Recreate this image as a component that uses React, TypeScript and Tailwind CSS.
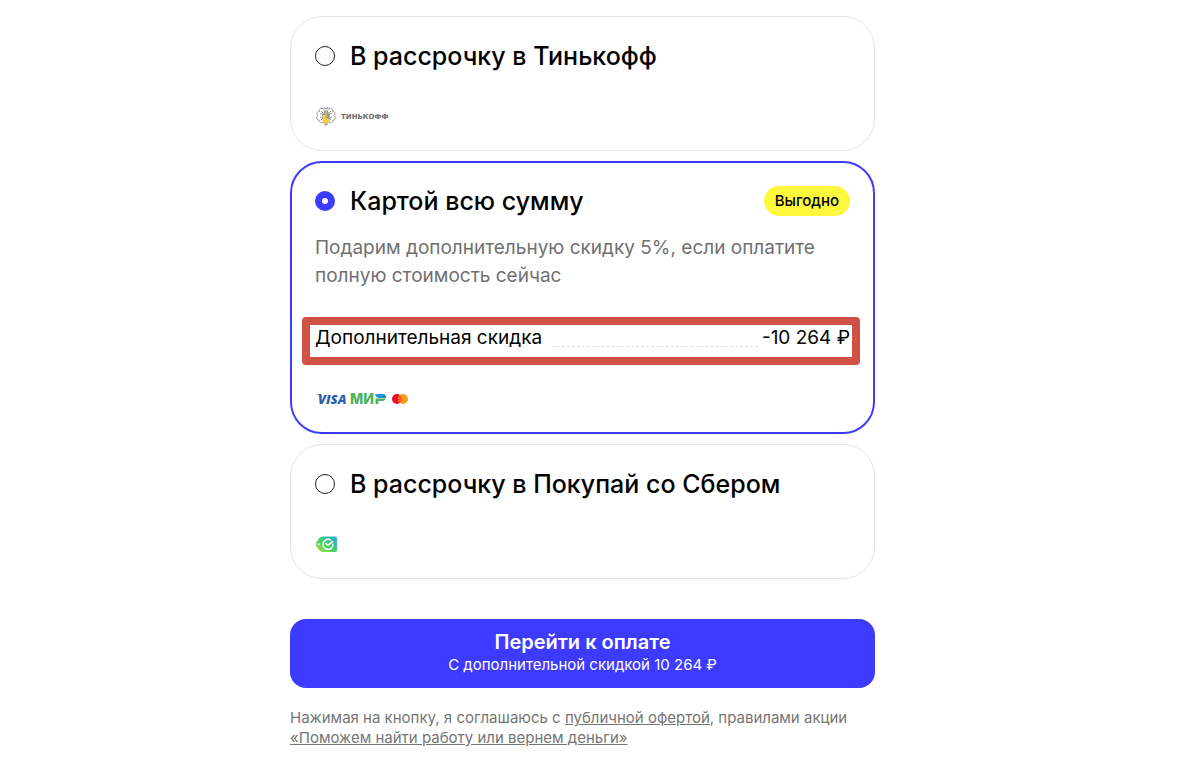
import { useState } from "react";
import type { ReactNode } from "react";

function TinkoffLogo() {
  return (
    <svg width="78" height="20" viewBox="0 0 78 20" role="img" aria-label="Тинькофф">
      <g fill="none" stroke="#8a8a8e" strokeWidth="0.9">
        <path d="M8 2.5C5 1.5 3.5 4 4.5 5.5C2 5.5 1 8 3 9.5C.8 11 1.5 14 4 14C3.8 16.5 6.5 17.5 8 16" />
        <path d="M14 2.5C17 1.5 18.5 4 17.5 5.500C20 5.500 21 8 19 9.500C21.200 11 20.500 14 18 14C18.200 16.500 15.500 17.500 14 16" />
        <path d="M5 8c2-1 3 0 3 2s-2 2-3 1M17 8c-2-1-3 0-3 2s2 2 3 1M6 5l2 2M16 5l-2 2M6 14l2-2M16 14l-2-2" />
        <path d="M9 4V1.500l2 1.500l2-1.500V4M9 17.500l2 2l2-2" />
      </g>
      <path d="M7.500 6l1.500 1V4.500h4V7L14.500 6v8c0 2-1.500 3-3.500 5c-2-2-3.500-3-3.500-5z" fill="#9a9a9c" />
      <path d="M8 9h2.500v3.500h1.500l2.500 1v2.500l-3.500 2l-3-2z" fill="#f5d437" />
      <path d="M10.500 5h1.300v6.500h-1.300z" fill="#e0c64c" />
      <text x="26" y="13" fill="#6c6c70" fontFamily="DejaVu Sans, sans-serif" fontSize="7" fontWeight="700">
        ТИНЬКОФФ
      </text>
    </svg>
  );
}

function VisaLogo() {
  return (
    <svg width="31" height="20" viewBox="0 0 31 20" role="img" aria-label="Visa">
      <path d="M1 5h5l1 3C5.500 6.500 3.500 5.500 1 5.300z" fill="#2a5fad" />
      <text x="3" y="15" fill="#2a5fad" fontFamily="Open Sans, sans-serif" fontSize="13" fontStyle="italic" fontWeight="800">
        VISA
      </text>
    </svg>
  );
}

function MirLogo() {
  return (
    <svg width="37" height="20" viewBox="0 0 37 20" role="img" aria-label="Мир">
      <defs>
        <linearGradient id="mir-blue" x1="0" x2="1">
          <stop offset="0" stopColor="#22a8dc" />
          <stop offset="1" stopColor="#1b86c8" />
        </linearGradient>
      </defs>
      <text x="0" y="15" fill="#4db45e" fontFamily="Inter, sans-serif" fontSize="14" fontWeight="800">
        МИ
      </text>
      <path d="M25.500 9.500h10.500c-.6 1.600-2 2.500-3.800 2.500H28.300v3h-2.800z" fill="#4db45e" />
      <path d="M25 5h7.800c2.300 0 3.700 1.700 3.300 4H29.200c-2.200 0-4-1.700-4.200-4z" fill="url(#mir-blue)" />
    </svg>
  );
}

function MastercardLogo() {
  return (
    <svg width="17" height="20" viewBox="0 0 17 20" role="img" aria-label="Mastercard">
      <circle cx="6" cy="10" r="5" fill="#eb0f25" />
      <circle cx="12" cy="10" r="5" fill="#f99d1f" />
      <path d="M9 6a5 5 0 0 1 0 8a5 5 0 0 1 0-8z" fill="#fc5d17" />
    </svg>
  );
}

function SberLogo() {
  return (
    <svg width="22" height="20" viewBox="0 0 22 20" role="img" aria-label="Покупай со Сбером">
      <defs>
        <linearGradient id="sber-tag" x1="0" y1="1" x2="1" y2="0">
          <stop offset="0" stopColor="#b5e43c" />
          <stop offset="0.5" stopColor="#42cf6c" />
          <stop offset="1" stopColor="#2fa7dd" />
        </linearGradient>
      </defs>
      <path d="M7.500 2.500H20Q22 2.500 22 4.500V16Q22 18 20 18H7.500Q5.500 18 4 16L1.500 12.500Q0 10.300 1.500 8L4 4.500Q5.500 2.500 7.500 2.500z" fill="url(#sber-tag)" />
      <circle cx="3.800" cy="10.300" r="1" fill="#fff" />
      <path d="M16 6.300A5 5 0 1 0 18 9.800" fill="none" stroke="#fff" strokeWidth="1.400" />
      <path d="M10.500 9.200l2.500 1.900l5-3.700" fill="none" stroke="#fff" strokeWidth="1.500" />
    </svg>
  );
}

type CardProps = {
  id: string;
  title: string;
  checked: boolean;
  onSelect: (id: string) => void;
  badge?: string;
  children: ReactNode;
};

function PaymentCard({ id, title, checked, onSelect, badge, children }: CardProps) {
  return (
    <section
      className={
        checked
          ? "rounded-[32px] border-2 border-[#3d3bff] p-[23px]"
          : "rounded-[32px] border border-[#e5e5e7] p-6"
      }
    >
      <div className="flex h-[30px] items-center justify-between">
        <label htmlFor={id} className="flex cursor-pointer items-center gap-[15px]">
          <input
            type="radio"
            id={id}
            name="payment"
            checked={checked}
            onChange={() => onSelect(id)}
            className="size-5 shrink-0 appearance-none rounded-full border border-[#222222] bg-white checked:border-[7px] checked:border-[#3d3bff]"
          />
          <span className="text-[25px] leading-[30px] font-medium">{title}</span>
        </label>
        {badge && (
          <span className="flex h-[30px] items-center rounded-full bg-[#fff83c] px-[11px] text-[15px] font-medium">
            {badge}
          </span>
        )}
      </div>
      {children}
    </section>
  );
}

export default function App() {
  const [selected, setSelected] = useState("card");

  return (
    <main className="min-h-screen bg-white pt-4 pr-[13px] pb-5 font-['Inter',sans-serif] text-black">
      <form className="mx-auto max-w-[585px]" onSubmit={(event) => event.preventDefault()}>
        <div className="flex flex-col gap-[10px]">
          <PaymentCard
            id="tinkoff"
            title="В рассрочку в Тинькофф"
            checked={selected === "tinkoff"}
            onSelect={setSelected}
          >
            <div className="mt-[35px] flex">
              <TinkoffLogo />
            </div>
          </PaymentCard>

          <PaymentCard
            id="card"
            title="Картой всю сумму"
            checked={selected === "card"}
            onSelect={setSelected}
            badge="Выгодно"
          >
            <p className="mt-[18px] text-[19px] leading-[28px] text-[#707070]">
              Подарим дополнительную скидку 5%, если оплатите полную стоимость сейчас
            </p>
            <div className="relative mt-[34px] flex text-[19px] leading-[28px]">
              <span>Дополнительная скидка</span>
              <span className="mr-1 mb-[5px] ml-[10px] grow border-b border-dashed border-[#dedede]" />
              <span>-10 264 ₽</span>
              <span className="pointer-events-none absolute -top-[7px] -right-[10px] -bottom-[13px] -left-[13px] rounded border-8 border-[#d15245]" />
            </div>
            <div className="mt-[37px] flex gap-1">
              <VisaLogo />
              <MirLogo />
              <MastercardLogo />
            </div>
          </PaymentCard>

          <PaymentCard
            id="sber"
            title="В рассрочку в Покупай со Сбером"
            checked={selected === "sber"}
            onSelect={setSelected}
          >
            <div className="mt-[35px] flex">
              <SberLogo />
            </div>
          </PaymentCard>
        </div>

        <button
          type="submit"
          className="mt-10 flex w-full cursor-pointer flex-col items-center rounded-2xl bg-[#3d3bff] pt-[11px] pb-3 text-white"
        >
          <span className="text-[20px] leading-[24px] font-semibold">Перейти к оплате</span>
          <span className="text-[15px] leading-[22px]">С дополнительной скидкой 10 264 ₽</span>
        </button>

        <p className="mt-5 text-[15px] leading-[20px] text-[#757575]">
          Нажимая на кнопку, я соглашаюсь с{" "}
          <a href="#offer" className="underline">публичной офертой</a>, правилами акции{" "}
          <a href="#promo" className="underline">«Поможем найти работу или вернем деньги»</a>
        </p>
      </form>
    </main>
  );
}
